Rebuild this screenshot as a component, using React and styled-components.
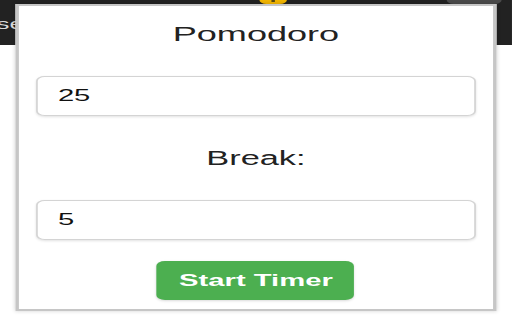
import React, { useState } from "react";
import styled, { createGlobalStyle } from "styled-components";

// the screenshot is stretched sideways, so the stage is drawn narrow and widened
const STRETCH = 1.718;

const GlobalStyle = createGlobalStyle`
  html, body {
    margin: 0;
    padding: 0;
    background: #ffffff;
    overflow: hidden;
  }
  #root {
    width: 512px;
    height: 320px;
    overflow: hidden;
  }
`;

const Stage = styled.div`
  position: relative;
  width: ${512 / STRETCH}px;
  height: 320px;
  transform: scaleX(${STRETCH});
  transform-origin: 0 0;
  font-family: "Liberation Sans", Arial, sans-serif;
`;

const BrowserBar = styled.div`
  height: 45px;
  background: #222222;
  display: flex;
  align-items: flex-start;
`;

const BarLabel = styled.span`
  margin-top: 15px;
  margin-left: -2px;
  width: 60px;
  color: #d8d8d8;
  font-size: 15px;
`;

const Spacer = styled.div`
  flex: 1;
`;

const ExtensionTab = styled.div`
  width: 16px;
  height: 4px;
  background: #f0b400;
  border-radius: 0 0 4px 4px;
  display: flex;
  justify-content: center;
`;

const TabMark = styled.div`
  width: 2px;
  height: 2px;
  background: #5a4a10;
`;

const ProfileNub = styled.div`
  width: 32px;
  height: 4px;
  margin-right: 6px;
  background: #4a4a4a;
  border-radius: 0 0 16px 16px;
`;

const Popup = styled.div`
  position: absolute;
  left: 8.7px;
  top: 4px;
  width: 280.6px;
  height: 307px;
  box-sizing: border-box;
  background: #ffffff;
  border: 2px solid #c6c6c6;
  box-shadow: 0 0 3px rgba(0, 0, 0, 0.18);
  padding: 16px 10px 0;
  display: flex;
  flex-direction: column;
  align-items: center;
`;

const Title = styled.h1`
  margin: 0;
  font-size: 21px;
  line-height: 24px;
  font-weight: normal;
  color: #222222;
`;

const Label = styled.label`
  margin-top: ${(p) => p.$gap}px;
  font-size: 20px;
  line-height: 23px;
  color: #222222;
`;

const NumberInput = styled.input`
  margin-top: ${(p) => p.$gap}px;
  width: 100%;
  height: 40px;
  box-sizing: border-box;
  border: 1px solid #d4d4d4;
  border-radius: 5px;
  box-shadow: 0 1px 2px rgba(0, 0, 0, 0.12);
  padding: 0 12px;
  font-family: "Liberation Sans", Arial, sans-serif;
  font-size: 17px;
  color: #111111;
  outline: none;
`;

const StartButton = styled.button`
  margin-top: 21px;
  width: 115px;
  height: 39px;
  border: none;
  border-radius: 5px;
  background: #4caf50;
  color: #ffffff;
  font-family: "Liberation Sans", Arial, sans-serif;
  font-size: 17px;
  font-weight: bold;
  cursor: pointer;
  box-shadow: 0 1px 2px rgba(0, 0, 0, 0.15);
`;

const App = () => {
  const [work, setWork] = useState("25");
  const [rest, setRest] = useState("5");

  return (
    <>
      <GlobalStyle />
      <Stage>
        <BrowserBar>
          <BarLabel>se</BarLabel>
          <Spacer />
          <ExtensionTab>
            <TabMark />
          </ExtensionTab>
          <Spacer />
          <ProfileNub />
        </BrowserBar>
        <Popup>
          <Title>Pomodoro</Title>
          <NumberInput
            $gap={30}
            type="text"
            value={work}
            onChange={(e) => setWork(e.target.value)}
          />
          <Label $gap={31}>Break:</Label>
          <NumberInput
            $gap={30}
            type="text"
            value={rest}
            onChange={(e) => setRest(e.target.value)}
          />
          <StartButton>Start Timer</StartButton>
        </Popup>
      </Stage>
    </>
  );
};

export default App;
